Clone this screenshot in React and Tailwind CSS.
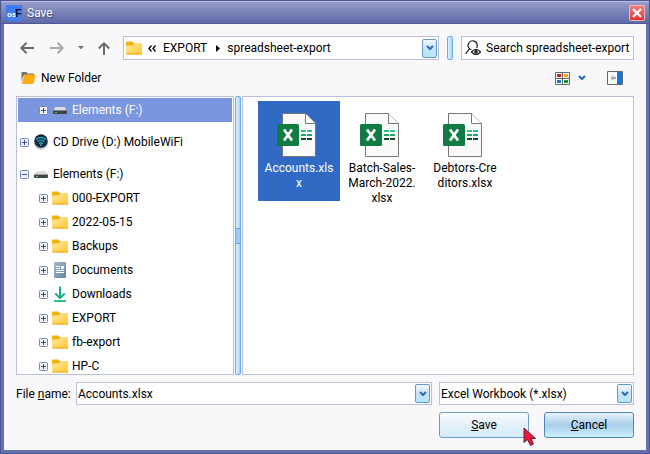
import React, { useState } from "react";

function Folder() {
  return (
    <svg width="16" height="14" viewBox="0 0 16 14" className="shrink-0">
      <defs>
        <linearGradient id="folderFace" x1="0" y1="0" x2="1" y2="1">
          <stop offset="0" stopColor="#ffe7a2" />
          <stop offset="1" stopColor="#ffc62f" />
        </linearGradient>
      </defs>
      <path d="M0 1.5Q0 .5 1 .5H6.5L8.5 2.5H15.5V6H0Z" fill="#f5b20f" />
      <path d="M0 4.5H6.5L8.5 2.5H15Q16 2.5 16 3.5V12.5Q16 13.5 15 13.5H1Q0 13.5 0 12.5Z" fill="url(#folderFace)" />
      <path d="M.3 13H15.7" stroke="#eca514" />
    </svg>
  );
}

function Drive() {
  return (
    <svg width="16" height="14" viewBox="0 0 16 14" className="shrink-0">
      <path d="M3.5 4H12.5L15 7.5H1Z" fill="#dedede" />
      <path d="M1 7.5H15V10Q15 11 14 11H2Q1 11 1 10Z" fill="#444" />
      <path d="M3 9.5H5" stroke="#35e04b" />
    </svg>
  );
}

function Wifi() {
  return (
    <svg width="16" height="16" viewBox="0 0 16 16" className="shrink-0">
      <circle cx="8" cy="8.8" r="7" fill="#c3c7d2" />
      <circle cx="8" cy="7" r="6.7" fill="#17273b" />
      <g fill="none" stroke="#20abc6" strokeWidth="1.3">
        <path d="M3 5.5Q8 1.3 13 5.5M4.5 7.6Q8 4.6 11.5 7.6M6 9.6Q8 7.8 10 9.6" />
      </g>
      <circle cx="8" cy="11" r="1" fill="#20abc6" />
    </svg>
  );
}

function Doc() {
  return (
    <svg width="16" height="16" viewBox="0 0 16 16" className="shrink-0">
      <defs>
        <linearGradient id="docFace" x1="0" y1="0" x2="1" y2="1">
          <stop offset="0" stopColor="#a9bbcd" />
          <stop offset="1" stopColor="#64829f" />
        </linearGradient>
      </defs>
      <rect x="2" width="12" height="16" rx="1" fill="url(#docFace)" />
      <path d="M4 4.5H8M4 6.5H8M4 8.5H12M4 10.5H12" stroke="#fff" />
      <path d="M9 4H12V7H9Z" fill="#fff" />
    </svg>
  );
}

function Download() {
  return (
    <svg width="16" height="16" viewBox="0 0 16 16" className="shrink-0" fill="none" stroke="#1dab8e" strokeWidth="2">
      <path d="M8 .5V12M3.3 7.5L8 12.2L12.7 7.5" />
      <path d="M2 15H14" stroke="#2fc08c" />
    </svg>
  );
}

function Excel() {
  return (
    <svg width="40" height="44" viewBox="0 0 40 44" className="shrink-0">
      <path d="M5.5 .5H28.5L38.5 10.5V43.5H5.5Z" fill="#fafafa" stroke="#777" />
      <path d="M28.5 .5V10.5H38.5" fill="#fff" stroke="#777" />
      <g strokeWidth="2">
        <path d="M24 18H29M30 18H35" stroke="#2fc48a" />
        <path d="M24 22H29M30 22H35" stroke="#21a366" />
        <path d="M24 26H29M30 26H35" stroke="#134d2e" />
      </g>
      <rect y="11" width="22" height="22" rx="1.5" fill="#107c41" />
      <path d="M7 16.5L15 27.5M15 16.5L7 27.5" stroke="#fff" strokeWidth="2.8" />
    </svg>
  );
}

function Expander({ open, name }) {
  return (
    <button aria-label={(open ? "Collapse " : "Expand ") + name} className="size-[9px] shrink-0">
      <svg width="9" height="9" viewBox="0 0 9 9" className="block">
        <rect x=".5" y=".5" width="8" height="8" rx="1" fill="#f1f3fb" stroke="#7a85b8" />
        <path d={open ? "M2 4.5H7" : "M2 4.5H7M4.5 2V7"} stroke="#3c4a90" />
      </svg>
    </button>
  );
}

function Chevron() {
  return (
    <svg width="8" height="6" viewBox="0 0 8 6" fill="none" stroke="#2c6cb4" strokeWidth="2">
      <path d="M1 1L4 4L7 1" />
    </svg>
  );
}

const dropFace =
  "flex h-[19px] w-[15px] shrink-0 items-center justify-center rounded-[2px] border border-[#5f9bd0] bg-linear-to-b from-[#f3f9fe] via-[#cbe4f7] to-[#b4e4fa]";

function Splitter({ grip }) {
  return (
    <div
      role="separator"
      className="flex w-[6px] shrink-0 flex-col justify-center rounded-[2px] border border-[#69aee8] bg-linear-to-r from-[#e4f3fe] to-[#a4d3fa]"
    >
      {grip && <div className="h-4 border-y border-[#58a6ec] bg-[#9ccbfb]" />}
    </div>
  );
}

const tree = [
  { name: "Elements (F:)", Icon: Drive, selected: true, nested: true },
  { name: "CD Drive (D:) MobileWiFi", Icon: Wifi },
  { name: "Elements (F:)", Icon: Drive, open: true },
  { name: "000-EXPORT", Icon: Folder, nested: true },
  { name: "2022-05-15", Icon: Folder, nested: true },
  { name: "Backups", Icon: Folder, nested: true },
  { name: "Documents", Icon: Doc, nested: true },
  { name: "Downloads", Icon: Download, nested: true },
  { name: "EXPORT", Icon: Folder, nested: true },
  { name: "fb-export", Icon: Folder, nested: true },
  { name: "HP-C", Icon: Folder, nested: true },
];

const files = ["Accounts.xls\nx", "Batch-Sales-\nMarch-2022.\nxlsx", "Debtors-Cre\nditors.xlsx"];

export default function App() {
  const [fileName, setFileName] = useState("Accounts.xlsx");
  return (
    <div className="relative flex h-screen flex-col border border-[#4b5590] bg-[#6570ac] font-['Roboto',sans-serif] text-[12px] leading-4 text-black">
      <header className="flex h-[23px] shrink-0 items-center border-t border-[#b9bee0] border-b border-b-[#4e5a98] bg-linear-to-b from-[#969dca] to-[#5f69a6] pr-1 pl-[5px] text-white">
        <svg width="16" height="16" viewBox="0 0 16 16" fontFamily="Liberation Sans, sans-serif" fontWeight="700">
          <rect width="16" height="16" fill="#3f7df0" />
          <text x="1" y="12" fontSize="8" fill="#fff">os</text>
          <text x="9" y="12" fontSize="11" fill="#090f2b">F</text>
        </svg>
        <h1 className="ml-[5px] flex-1 text-shadow-[1px_1px_1px_#3f4a86]">Save</h1>
        <button aria-label="Close" className="flex size-4 items-center justify-center rounded-[2px] border border-[#f4b5b8] bg-linear-to-b from-[#f37c7c] to-[#e22f34]">
          <svg width="10" height="10" viewBox="0 0 10 10" stroke="#fff" strokeWidth="2.2">
            <path d="M1 1L9 9M9 1L1 9" />
          </svg>
        </button>
      </header>

      <main className="mx-[3px] mb-[3px] flex min-h-0 flex-1 flex-col bg-[#f8f8fb] px-3 pt-3 pb-3">
        <div className="flex h-6 shrink-0">
          <nav className="flex w-[107px] shrink-0 items-center" aria-label="History">
            <button aria-label="Back" className="ml-1">
              <svg width="14" height="12" viewBox="0 0 14 12" fill="none" stroke="#6b6b6b" strokeWidth="2"><path d="M14 6H1.5M6.5 .8L1.3 6L6.5 11.2" /></svg>
            </button>
            <button aria-label="Forward" className="ml-4">
              <svg width="14" height="12" viewBox="0 0 14 12" fill="none" stroke="#a9a9a9" strokeWidth="2"><path d="M0 6H12.5M7.5 .8L12.7 6L7.5 11.2" /></svg>
            </button>
            <button aria-label="Recent locations" className="ml-[14px]">
              <svg width="6" height="4" viewBox="0 0 6 4"><path d="M0 0H6L3 3.5Z" fill="#777" /></svg>
            </button>
            <button aria-label="Up" className="ml-[14px]">
              <svg width="12" height="13" viewBox="0 0 12 13" fill="none" stroke="#6b6b6b" strokeWidth="2"><path d="M6 13V1.5M.8 6.5L6 1.3L11.2 6.5" /></svg>
            </button>
          </nav>
          <div className="flex min-w-0 flex-1 items-center border border-[#b9bfdc] bg-white pr-px pl-0.5">
            <Folder />
            <svg width="8" height="7" viewBox="0 0 8 7" className="ml-1.5" fill="none" stroke="#000" strokeWidth="1.3"><path d="M3.5 .5L1 3.5L3.5 6.5M7.5 .5L5 3.5L7.5 6.5" /></svg>
            <button className="ml-[7px]">EXPORT</button>
            <svg width="4" height="7" viewBox="0 0 4 7" className="ml-[9px]"><path d="M0 0L4 3.5L0 7Z" /></svg>
            <button className="ml-[7px]">spreadsheet-export</button>
            <button aria-label="Show locations" className={dropFace + " ml-auto"}><Chevron /></button>
          </div>
          <div className="ml-2 flex"><Splitter /></div>
          <label className="ml-2 flex w-[173px] shrink-0 items-center border border-[#b9bfdc] bg-white pl-[3px]">
            <svg width="16" height="16" viewBox="0 0 16 16" className="shrink-0" fill="none" stroke="#222" strokeWidth="1.2">
              <path d="M.5 14L4.2 9.2H5.3A4.5 4.5 0 1 1 12 6.5V8" />
              <path d="M6.5 12Q11 6.8 15.5 12Q11 17 6.5 12Z" />
              <circle cx="11" cy="11.9" r="1.2" fill="#222" />
            </svg>
            <input aria-label="Search" placeholder="Search spreadsheet-export" className="ml-[5px] w-full min-w-0 bg-transparent outline-none placeholder:text-black" />
          </label>
        </div>

        <div className="flex h-9 shrink-0 items-center pr-[11px] pl-[5px]">
          <button className="flex items-center gap-[5px]">
            <svg width="15" height="12" viewBox="0 0 15 12">
              <path d="M.5 0H5.5L6.5 1.5H13V4H2L.5 10Z" fill="#707070" />
              <path d="M3 2.5H14.5L12.5 12H1Z" fill="#ffab12" />
            </svg>
            New Folder
          </button>
          <button aria-label="View" className="ml-auto">
            <svg width="15" height="13" viewBox="0 0 15 13">
              <path d="M.5 .5H14.5V12.5H.5ZM7.5 .5V12.5M.5 6.5H14.5" fill="#fff" stroke="#686868" />
              <path d="M2 2H6V5H2Z" fill="#cf2027" /><path d="M9 2H13V5H9Z" fill="#f9a800" />
              <path d="M2 8H6V11H2Z" fill="#1677d2" /><path d="M9 8H13V11H9Z" fill="#169c2b" />
            </svg>
          </button>
          <button aria-label="View options" className="ml-2"><Chevron /></button>
          <button aria-label="Preview pane" className="ml-[21px]">
            <svg width="16" height="14" viewBox="0 0 16 14">
              <path d="M.5 .5H15.5V13.5H.5Z" fill="#fafafa" stroke="#686868" />
              <path d="M10 1H15V13H10Z" fill="#1177dc" />
              <path d="M9 7H5" stroke="#aaa" strokeWidth="2" />
              <path d="M6.5 4V10L3.5 7Z" fill="#aaa" />
            </svg>
          </button>
        </div>

        <div className="flex min-h-0 flex-1">
          <ul className="w-[218px] shrink-0 overflow-hidden border border-[#b9bfdc] bg-white p-px">
            {tree.map(({ name, Icon, selected, nested, open }, i) => (
              <li
                key={i}
                className={
                  "flex h-6 items-center gap-1 " +
                  (nested ? "pl-[21px] " : "mt-2 pl-0.5 ") +
                  (selected ? "bg-[#7a96df] text-white" : "")
                }
              >
                <Expander open={open} name={name} />
                <Icon />
                <span className="truncate">{name}</span>
              </li>
            ))}
          </ul>
          <div className="mx-px flex"><Splitter grip /></div>
          <ul className="flex min-w-0 flex-1 items-start gap-px overflow-hidden border border-[#b9bfdc] bg-white pt-1 pl-[15px]">
            {files.map((name, i) => (
              <li
                key={name}
                className={
                  "flex min-h-[100px] w-[82px] shrink-0 flex-col items-center pt-3 text-center leading-[15px] " +
                  (i === 0 ? "bg-[#316ac5] text-white" : "")
                }
              >
                <div className="mb-1 pr-1"><Excel /></div>
                <p className="whitespace-pre">{name}</p>
              </li>
            ))}
          </ul>
        </div>

        <form className="shrink-0" onSubmit={(e) => e.preventDefault()}>
          <div className="mt-[7px] flex h-[23px]">
            <label htmlFor="fileName" className="w-[60px] shrink-0 self-center whitespace-nowrap">File <u>n</u>ame:</label>
            <div className="flex min-w-0 flex-1 items-center border border-[#b9bfdc] bg-white pr-px">
              <input id="fileName" value={fileName} onChange={(e) => setFileName(e.target.value)} className="min-w-0 flex-1 pl-px outline-none" />
              <button type="button" aria-label="Recent file names" className={dropFace}><Chevron /></button>
            </div>
            <div className="relative ml-[7px] flex w-[195px] shrink-0 border border-[#b9bfdc] bg-white">
              <select aria-label="File type" className="w-full appearance-none bg-transparent pl-px outline-none">
                <option>Excel Workbook (*.xlsx)</option>
              </select>
              <span className={dropFace + " pointer-events-none absolute top-px right-px"}><Chevron /></span>
            </div>
          </div>
          <div className="mt-[7px] flex justify-end gap-[15px]">
            <button type="submit" className="h-[26px] w-[90px] rounded-[3px] border border-[#6d9dc9] bg-linear-to-b from-[#fafcfe] via-[#e3eff8] to-[#d4eefb]"><u>S</u>ave</button>
            <button type="button" className="h-[26px] w-[90px] rounded-[3px] border border-[#4b86bd] bg-linear-to-b from-[#e8f2fa] via-[#a9cfea] to-[#cdf0fd]"><u>C</u>ancel</button>
          </div>
        </form>
      </main>

      <svg width="14" height="20" viewBox="0 0 14 20" className="pointer-events-none absolute right-[112px] bottom-[6px]">
        <path d="M1 1V15.5L4.5 12.5L7.5 18.5L10.5 17L8 11.5H12.5Z" fill="#f5123f" stroke="#50262e" />
      </svg>
    </div>
  );
}
